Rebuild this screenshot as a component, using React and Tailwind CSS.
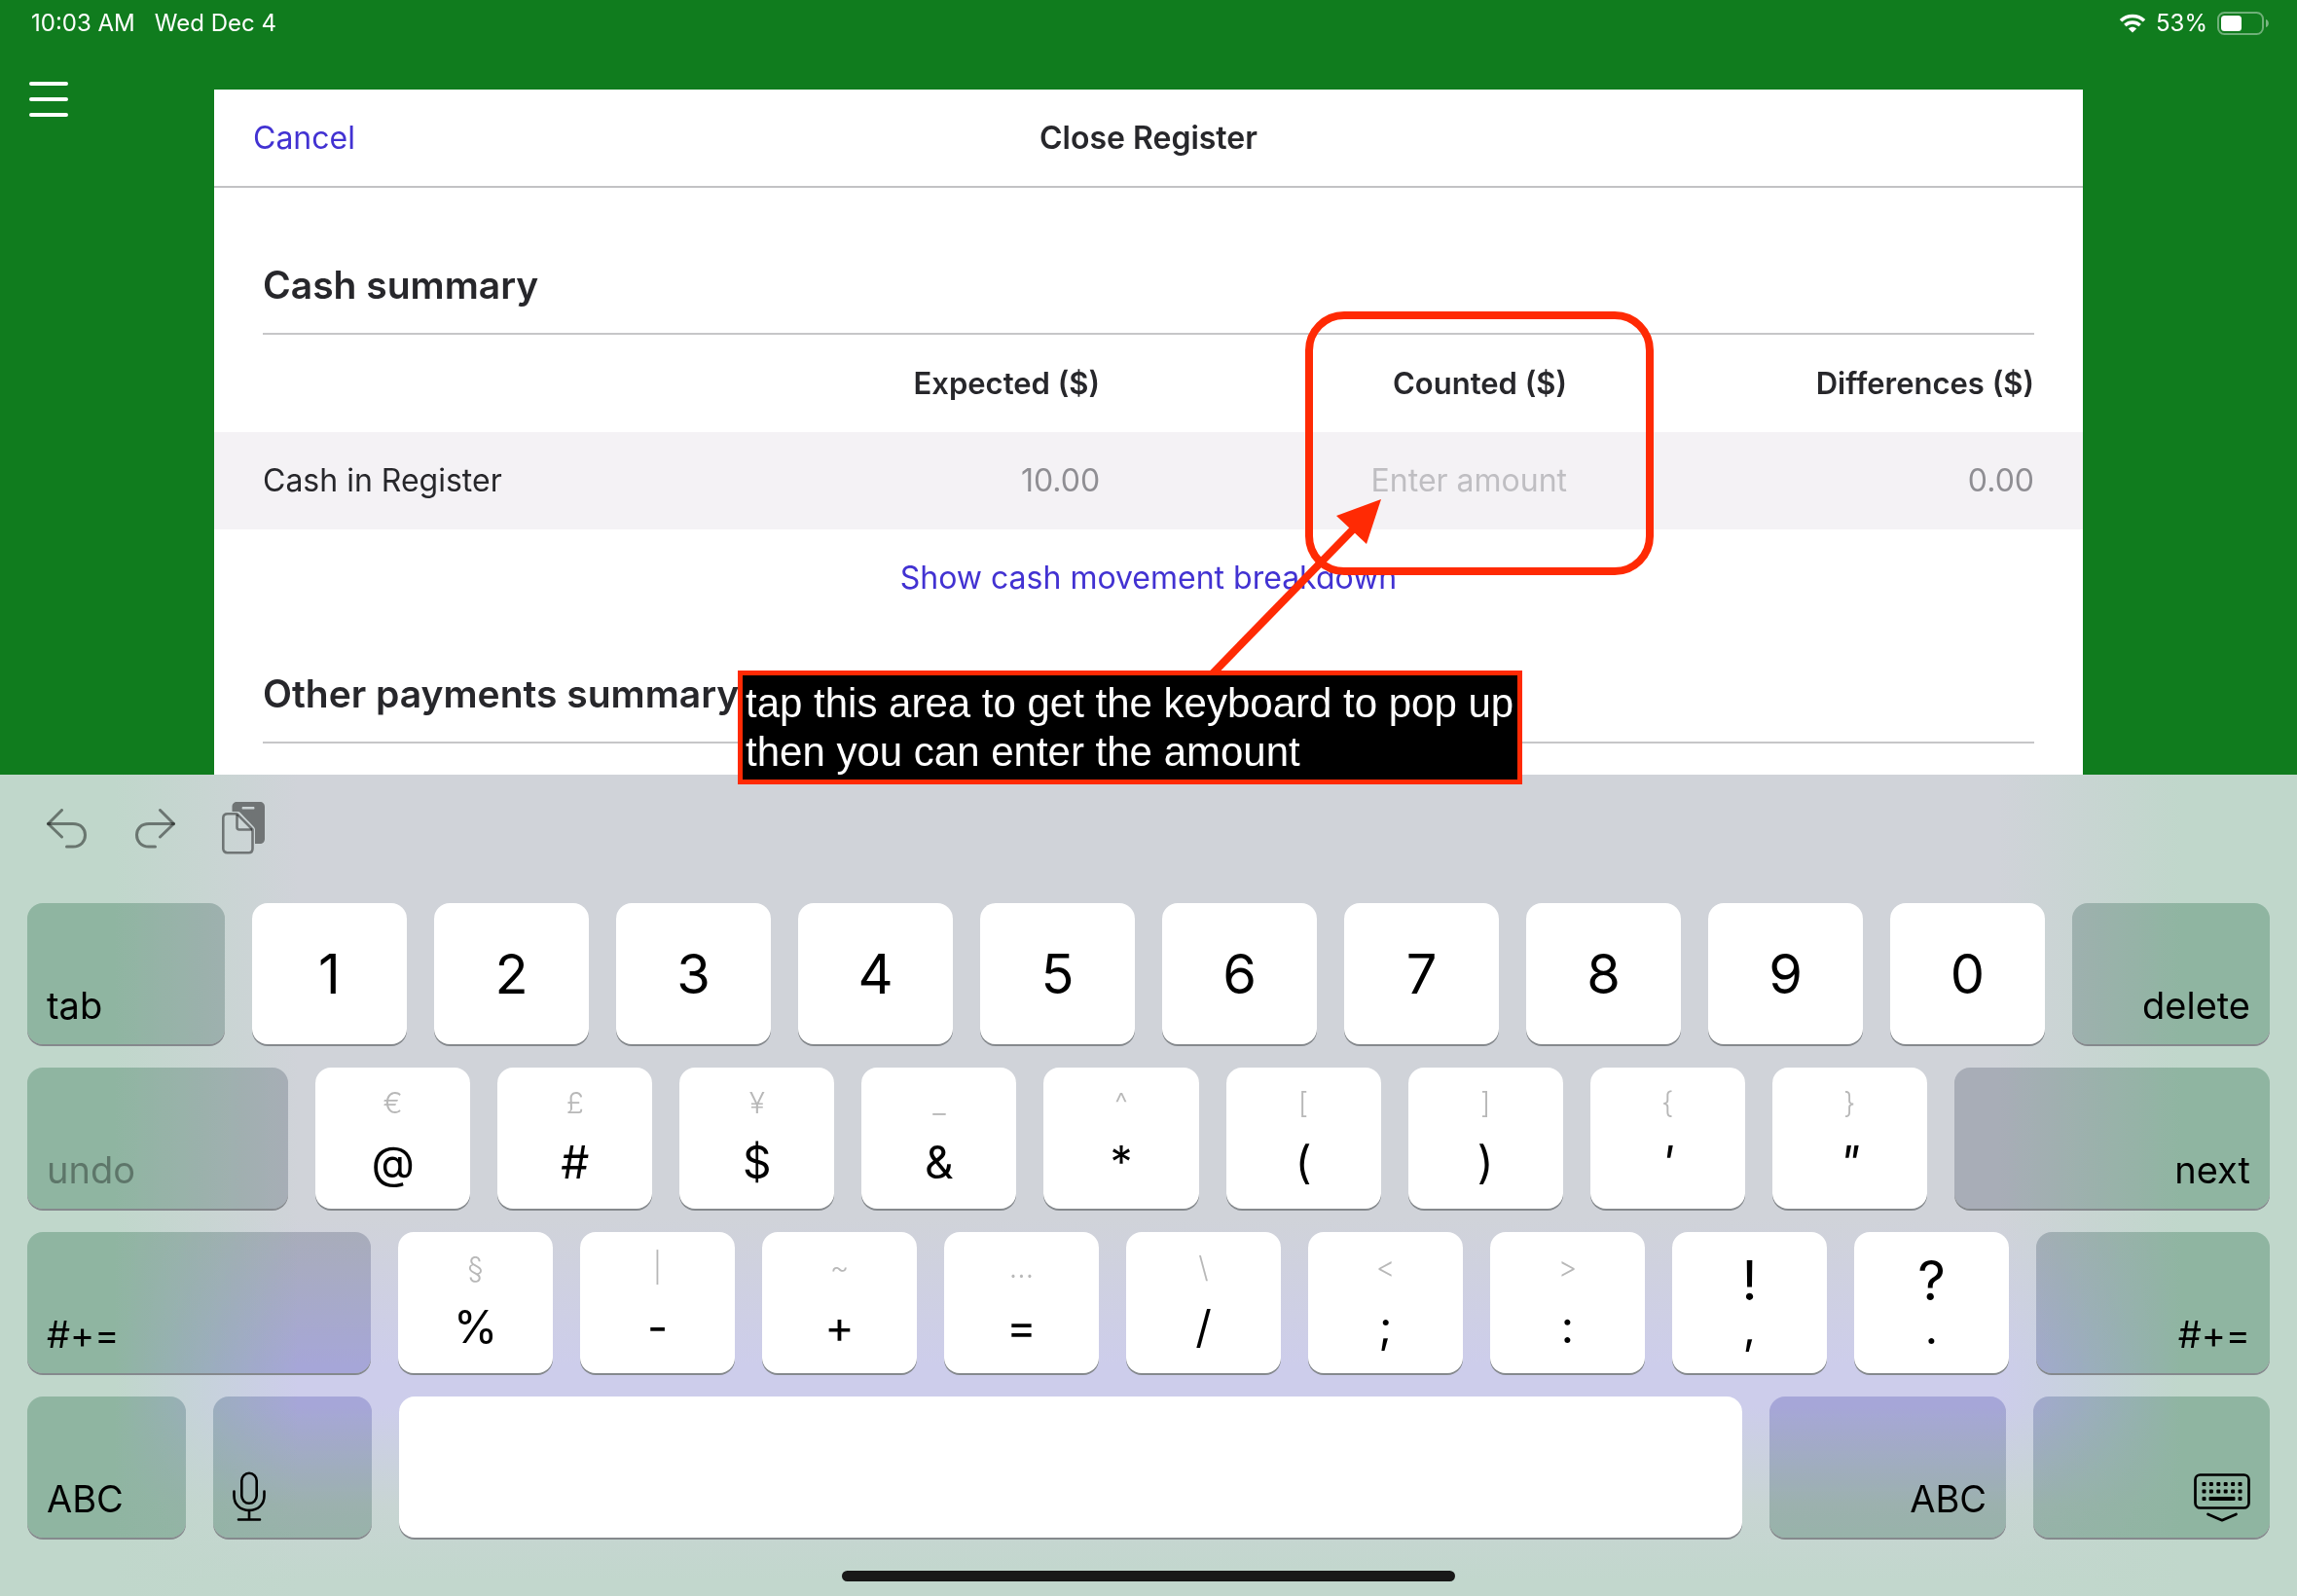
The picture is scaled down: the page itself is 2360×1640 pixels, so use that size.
import React from "react";

const numberRow = ["1", "2", "3", "4", "5", "6", "7", "8", "9", "0"];

const symbolRowOne = [
  ["€", "@"],
  ["£", "#"],
  ["¥", "$"],
  ["_", "&"],
  ["^", "*"],
  ["[", "("],
  ["]", ")"],
  ["{", "'"],
  ["}", '"'],
];

const symbolRowTwo = [
  ["§", "%"],
  ["|", "-"],
  ["~", "+"],
  ["…", "="],
  ["\\", "/"],
  ["<", ";"],
  [">", ":"],
];

const keyShape = "h-[145px] rounded-2xl shadow-[0_2px_0_#85898d]";
const lightKey = `${keyShape} min-w-0 flex-[159_159_159px] bg-white text-black`;
const darkKey = `${keyShape} min-w-0 flex items-end px-5 pb-4 text-[38px] leading-[48px] text-black backdrop-brightness-[.82] backdrop-saturate-200`;

function WifiIcon() {
  return (
    <svg viewBox="0 0 28 20" className="h-5 w-7" fill="none" aria-hidden="true">
      <path d="M2 7.2C8.6 .9 19.400 .9 26 7.200" stroke="white" strokeWidth="3.600" />
      <path d="M6.300 12C10.600 8 17.400 8 21.700 12" stroke="white" strokeWidth="3.400" />
      <path d="M9.900 15.400C12.200 13.300 15.800 13.300 18.100 15.400L14 19.600Z" fill="white" />
    </svg>
  );
}

function BatteryIcon() {
  return (
    <svg viewBox="0 0 54 24" className="h-6 w-[54px]" fill="none" aria-hidden="true">
      <rect x="1" y="1" width="46" height="22" rx="6.500" stroke="white" strokeOpacity=".4" strokeWidth="2" />
      <rect x="4" y="4" width="21" height="16" rx="3.500" fill="white" />
      <path d="M50 8C53.800 9 53.800 15 50 16Z" fill="white" fillOpacity=".45" />
    </svg>
  );
}

function UndoIcon({ flipped }) {
  return (
    <svg viewBox="0 0 42 42" className={flipped ? "size-[42px] -scale-x-100" : "size-[42px]"} fill="none" stroke="currentColor" strokeWidth="3" strokeLinecap="round" strokeLinejoin="round" aria-hidden="true">
      <path d="M15.500 1.500L1.500 15.500L15.500 29" />
      <path d="M1.500 15.500H27C35 15.500 39.500 20.500 39.500 27C39.500 33.500 35 39 27 39H20.500" />
    </svg>
  );
}

function PasteIcon() {
  return (
    <svg viewBox="0 0 44 54" className="h-[54px] w-11" fill="none" aria-hidden="true">
      <path
        fill="currentColor"
        fillRule="evenodd"
        d="M10.500 10V5C10.500 2 12.500 0 15.500 0H39C42 0 44 2 44 5V38C44 41 42 43 39 43H34V28.500C34 27.500 33.600 26.700 33 26L19 11.200C18.200 10.400 17.500 10 16.500 10ZM21.500 5C20.300 5 20.300 7.600 21.500 7.600H32.500C33.800 7.600 33.800 5 32.500 5Z"
      />
      <path
        d="M6 12.300H15.500L31.500 28.500V48C31.500 50.500 30 52.200 27.500 52.200H5.500C3 52.200 1.300 50.500 1.300 48V16.500C1.300 14 3 12.300 6 12.300Z"
        stroke="currentColor"
        strokeWidth="2.600"
        strokeLinejoin="round"
      />
      <path d="M15.500 13V26C15.500 27.500 16.500 28.500 18 28.500H31" stroke="currentColor" strokeWidth="2.600" />
    </svg>
  );
}

function MicIcon() {
  return (
    <svg viewBox="0 0 34 52" className="h-[52px] w-[34px]" fill="none" stroke="currentColor" strokeWidth="2.600" strokeLinecap="round" aria-hidden="true">
      <rect x="9.300" y="1.800" width="15.400" height="31" rx="7.700" />
      <path d="M1.500 20.500V25C1.500 34 8 40 17 40C26 40 32.500 34 32.500 25V20.500" />
      <path d="M17 40V49.500M6 49.500H28" />
    </svg>
  );
}

function KeyboardIcon() {
  const dots = [0, 1, 2, 3, 4, 5];
  return (
    <svg viewBox="0 0 58 50" className="h-[50px] w-[58px]" fill="none" aria-hidden="true">
      <rect x="1.500" y="1.500" width="55" height="34" rx="5" stroke="currentColor" strokeWidth="2.700" />
      {dots.map((i) => (
        <rect key={`a${i}`} x={8.5 + i * 7.4} y="9" width="4" height="4" rx="1" fill="currentColor" />
      ))}
      {dots.map((i) => (
        <rect key={`b${i}`} x={8.5 + i * 7.4} y="16.500" width="4" height="4" rx="1" fill="currentColor" />
      ))}
      <rect x="8.500" y="24" width="4" height="4" rx="1" fill="currentColor" />
      <rect x="15.500" y="24" width="27" height="4" rx="1" fill="currentColor" />
      <rect x="45.500" y="24" width="4" height="4" rx="1" fill="currentColor" />
      <path d="M14.500 42L29 48.200L43.500 42" stroke="currentColor" strokeWidth="2.700" strokeLinecap="round" strokeLinejoin="round" />
    </svg>
  );
}

function SymbolKey({ alt, main }) {
  const slanted = main === "'" || main === '"';
  return (
    <button type="button" className={`${lightKey} flex flex-col items-center pt-3`}>
      <span className="text-[30px] font-light leading-[48px] text-[#b8b8b8]">{alt}</span>
      <span className={slanted ? "text-[46px] italic leading-[74px]" : "text-[46px] leading-[74px]"}>{main}</span>
    </button>
  );
}

function PunctuationKey({ top, bottom }) {
  return (
    <button type="button" className={`${lightKey} flex flex-col items-center pt-6`}>
      <span className="text-[56px] leading-[52px]">{top}</span>
      <span className="text-[46px] leading-[44px]">{bottom}</span>
    </button>
  );
}

function StatusBar() {
  return (
    <header className="flex h-12 shrink-0 items-center justify-between pl-8 pr-7 text-2xl text-white">
      <div className="flex gap-5">
        <span>10:03 AM</span>
        <span>Wed Dec 4</span>
      </div>
      <div className="flex items-center gap-2.5">
        <WifiIcon />
        <span>53%</span>
        <BatteryIcon />
      </div>
    </header>
  );
}

function SectionTitle({ children }) {
  return (
    <h2 className="mx-[50px] h-[100px] border-b-2 border-[#c6c6c8] text-[39px] font-semibold leading-[98px] text-[#27272b]">
      {children}
    </h2>
  );
}

function RegisterSheet() {
  return (
    <section className="h-full overflow-hidden bg-white text-[32px] text-[#27272b]">
      <div className="grid h-[101px] grid-cols-3 items-center border-b-2 border-[#c2c2c4] px-10">
        <button type="button" className="justify-self-start text-[#4232d2]">Cancel</button>
        <h1 className="text-center font-semibold">Close Register</h1>
      </div>
      <div className="pt-[51px]">
        <SectionTitle>Cash summary</SectionTitle>
        <table className="w-full table-fixed">
          <thead>
            <tr className="h-[100px] text-right text-[31px]">
              <td className="w-[22%]"></td>
              <th scope="col" className="w-[25.400%] text-right font-semibold">Expected ($)</th>
              <th scope="col" className="w-[25%] text-right font-semibold">Counted ($)</th>
              <th scope="col" className="pr-[50px] text-right font-semibold">Differences ($)</th>
            </tr>
          </thead>
          <tbody>
            <tr className="h-[100px] bg-[#f4f2f5] text-right text-[#8f8e93]">
              <th scope="row" className="whitespace-nowrap pl-[50px] text-left font-normal text-[#27272b]">
                Cash in Register
              </th>
              <td>10.00</td>
              <td>
                <input
                  aria-label="Counted cash in register"
                  placeholder="Enter amount"
                  inputMode="decimal"
                  className="w-full bg-transparent text-right outline-none placeholder:text-[#bfbec2]"
                />
              </td>
              <td className="pr-[50px]">0.00</td>
            </tr>
          </tbody>
        </table>
        <div className="flex h-[100px] items-center justify-center">
          <button type="button" className="text-[#4232d2]">Show cash movement breakdown</button>
        </div>
        <div className="pt-5">
          <SectionTitle>Other payments summary</SectionTitle>
        </div>
      </div>
    </section>
  );
}

function Annotations() {
  return (
    <div className="pointer-events-none">
      <div className="absolute left-[1121px] top-[228px] h-[271px] w-[358px] rounded-[40px] border-8 border-[#ff2a04]"></div>
      <svg viewBox="0 0 180 180" className="absolute left-[1021px] top-[420px] size-[180px]" aria-hidden="true">
        <path d="M4 181L154 27" stroke="#ff2a04" strokeWidth="8" />
        <path d="M178 1L132 18L163 47Z" fill="#ff2a04" />
      </svg>
      <p className="absolute left-[538px] top-[597px] w-[806px] whitespace-nowrap border-[5px] border-[#ff2a04] bg-black px-[3px] pb-[3px] pt-1 font-['Liberation_Sans',Arial,sans-serif] text-[42px] leading-[50px] text-white">
        tap this area to get the keyboard to pop up
        <br />
        then you can enter the amount
      </p>
    </div>
  );
}

function Keyboard() {
  return (
    <section
      aria-label="Keyboard"
      className="shrink-0 bg-[linear-gradient(to_right,#c0d7cb_5%,#c0d7cb00_13%,#c0d7cb00_87%,#c0d7cb_95%),linear-gradient(to_bottom,#d0d3d9_54%,#cdcdeb_72%,#cdcdeb_77%,#c8d5d3_89%,#c2d7cd_98%)] px-7"
    >
      <div className="flex h-[132px] items-start pt-7 text-black/45">
        <button type="button" aria-label="Undo" className="ml-5 mt-[7px]"><UndoIcon /></button>
        <button type="button" aria-label="Redo" className="ml-12 mt-[7px]"><UndoIcon flipped /></button>
        <button type="button" aria-label="Paste" className="ml-12"><PasteIcon /></button>
      </div>
      <div className="flex flex-col gap-6">
        <div className="flex gap-7">
          <button type="button" className={`${darkKey} flex-[203_203_203px]`}>tab</button>
          {numberRow.map((n) => (
            <button key={n} type="button" className={`${lightKey} text-[56px]`}>{n}</button>
          ))}
          <button type="button" className={`${darkKey} flex-[203_203_203px] justify-end`}>delete</button>
        </div>
        <div className="flex gap-7">
          <button type="button" disabled className={`${darkKey} flex-[268_268_268px]`}>
            <span className="text-black/35">undo</span>
          </button>
          {symbolRowOne.map(([alt, main]) => (
            <SymbolKey key={main} alt={alt} main={main} />
          ))}
          <button type="button" className={`${darkKey} flex-[324_324_324px] justify-end`}>next</button>
        </div>
        <div className="flex gap-7">
          <button type="button" className={`${darkKey} flex-[353_353_353px]`}>#+=</button>
          {symbolRowTwo.map(([alt, main]) => (
            <SymbolKey key={main} alt={alt} main={main} />
          ))}
          <PunctuationKey top="!" bottom="," />
          <PunctuationKey top="?" bottom="." />
          <button type="button" className={`${darkKey} flex-[240_240_240px] justify-end`}>#+=</button>
        </div>
        <div className="flex gap-7">
          <button type="button" className={`${darkKey} flex-[163_163_163px]`}>ABC</button>
          <button type="button" aria-label="Dictate" className={`${darkKey} flex-[163_163_163px]`}><MicIcon /></button>
          <button type="button" aria-label="Space" className={`${keyShape} min-w-0 flex-[1382_1382_1382px] bg-white`}></button>
          <button type="button" className={`${darkKey} flex-[243_243_243px] justify-end`}>ABC</button>
          <button type="button" aria-label="Hide keyboard" className={`${darkKey} flex-[243_243_243px] justify-end`}><KeyboardIcon /></button>
        </div>
      </div>
      <div className="flex h-[60px] justify-center pt-[34px]">
        <div className="h-[11px] w-[630px] rounded-full bg-[#181818]"></div>
      </div>
    </section>
  );
}

export default function App() {
  return (
    <div className="flex h-screen flex-col bg-[#107c1e] font-['Inter',sans-serif]">
      <StatusBar />
      <div className="flex min-h-0 flex-1">
        <div className="w-[220px] pl-[30px] pt-9">
          <button type="button" aria-label="Menu" className="block text-white">
            <svg viewBox="0 0 40 36" className="h-9 w-10" stroke="currentColor" strokeWidth="4" strokeLinecap="round" aria-hidden="true">
              <path d="M2 2H38M2 18H38M2 34H38" />
            </svg>
          </button>
        </div>
        <main className="relative z-10 mt-11 min-w-0 flex-1">
          <RegisterSheet />
          <Annotations />
        </main>
        <div className="w-[220px]"></div>
      </div>
      <Keyboard />
    </div>
  );
}
